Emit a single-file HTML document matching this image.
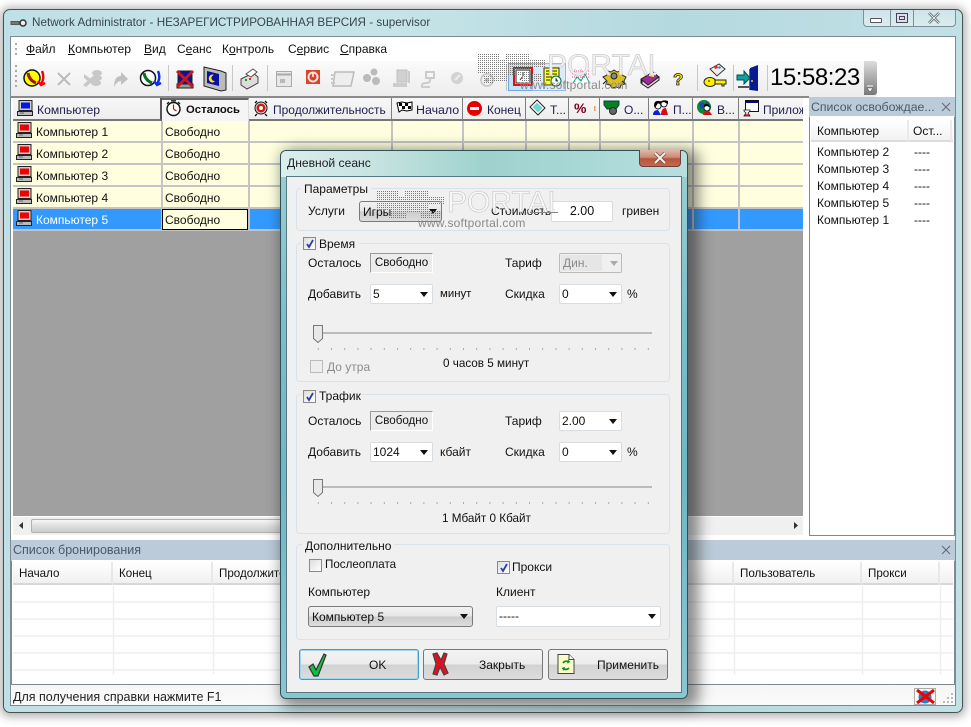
<!DOCTYPE html>
<html><head><meta charset="utf-8"><style>
html,body{margin:0;padding:0;width:971px;height:727px;overflow:hidden;background:#fff}
*{box-sizing:border-box}
body{font:12px/14px "Liberation Sans","Noto Sans CJK SC",sans-serif;color:#111;position:relative}
div,svg{position:absolute}
.t{white-space:nowrap;height:14px}
.c{border:1px solid #d8dde2;background:#fff;border-radius:2px}
.g{border:1px solid #d9e2e8;border-radius:4px}
.leg{background:#f0f0f0;padding:0 3px;white-space:nowrap;height:14px}
.ar{width:0;height:0;border:4px solid transparent;border-top:5px solid #111;border-bottom:0}
.hd{top:98px;height:23px;background:linear-gradient(#f7f7f7,#eee);border-right:1px solid #7e7e7e;border-bottom:2px solid #777}
.r{left:13px;width:790px;height:22px;background:#ffffdf;border-bottom:2px solid #c4c4c4}
.v{width:2px;background:#c4c4c4}
.cb{width:13px;height:13px;border:1px solid #8a8a8a;background:linear-gradient(135deg,#ddd,#fff)}
.sf{left:370px;width:63px;height:20px;border:1px solid #fff;border-left-color:#999;border-top-color:#999;background:#ececec;text-align:center;line-height:18px;font-size:11.6px}
.btn{top:649px;height:31px;border:1px solid #777;border-radius:3px;background:linear-gradient(#f4f4f4 0,#ececec 48%,#d2d2d2 52%,#dcdcdc 100%)}
.gl{background:linear-gradient(#e4e4e4,#bbb);border:1px solid #7a7a7a;border-radius:3px}
.w{color:#fff}
.lh{background:linear-gradient(#fff,#f0f0f0);border-right:2px solid #e8e8e8;border-bottom:2px solid #d8d8d8}
</style></head><body>

<!-- main window -->
<div style="left:3px;top:9px;width:960px;height:704px;border:1px solid #4a4f50;border-radius:7px;background:linear-gradient(90deg,#bfe0e6,#c6e4e8 40%,#b4d9df 70%,#c2e1e6);box-shadow:0 1px 9px 3px rgba(0,0,0,.3)"></div>
<svg style="left:10px;top:16px" width="18" height="14"><path d="M1 7h9M1 5.5h8v3H1z" stroke="#555" fill="#999"/><circle cx="13" cy="7" r="3" fill="#eee" stroke="#333" stroke-width="1.5"/></svg>
<div class="t" style="left:32px;top:16px;color:#39474e;font-size:11.7px">Network Administrator - НЕЗАРЕГИСТРИРОВАННАЯ ВЕРСИЯ - supervisor</div>

<!-- caption buttons -->
<div style="left:863px;top:10px;width:93px;height:17px;border:1px solid #78919a;border-top:0;border-radius:0 0 4px 4px;background:linear-gradient(#cde4e8,#dcecee)"></div>
<div style="left:890px;top:10px;width:1px;height:16px;background:#78919a"></div>
<div style="left:913px;top:10px;width:1px;height:16px;background:#78919a"></div>
<div style="left:870px;top:18px;width:12px;height:5px;border:1px solid #556;background:#fff;border-radius:1px"></div>
<div style="left:896px;top:13px;width:12px;height:10px;border:1px solid #445;background:#dde"></div>
<div style="left:899px;top:16px;width:6px;height:4px;border:1px solid #445"></div>
<svg style="left:927px;top:12px" width="14" height="12"><path d="M2 1l10 10M12 1L2 11" stroke="#4a5a60" stroke-width="2.6"/><path d="M2 1l10 10M12 1L2 11" stroke="#eee" stroke-width="1"/></svg>

<!-- client -->
<div style="left:10px;top:36px;width:946px;height:670px;background:#fff;border:1px solid #7d8b90"></div>
<div style="left:11px;top:37px;width:944px;height:24px;background:#fff"></div>
<svg style="left:15px;top:42px" width="4" height="16"><path d="M1 1v2M1 6v2M1 11v2" stroke="#aaa" stroke-width="2"/></svg>
<div class="t" style="left:26px;top:42px"><u>Ф</u>айл</div>
<div class="t" style="left:68px;top:42px;font-size:12.2px"><u>К</u>омпьютер</div>
<div class="t" style="left:144px;top:42px"><u>В</u>ид</div>
<div class="t" style="left:177px;top:42px">С<u>е</u>анс</div>
<div class="t" style="left:222px;top:42px">К<u>о</u>нтроль</div>
<div class="t" style="left:288px;top:42px">С<u>е</u>рвис</div>
<div class="t" style="left:340px;top:42px"><u>С</u>правка</div>

<!-- toolbar -->
<div style="left:11px;top:61px;width:866px;height:36px;border-radius:0 0 3px 0;background:linear-gradient(#fbfbfb,#ececec)"></div>
<div style="left:11px;top:96px;width:798px;height:2px;background:#8a8a8a"></div>
<svg style="left:15px;top:64px" width="4" height="28"><path d="M1 1v2M1 6v2M1 11v2M1 16v2M1 21v2" stroke="#aaa" stroke-width="2"/></svg>
<svg style="left:0;top:60px" width="880" height="38">
 <g stroke="#c8c8c8"><path d="M168.500 5v26M232.500 5v26M267.500 5v26M506.500 5v26M697.500 5v26M733.500 5v26M767.500 5v26"/></g>
 <circle cx="32" cy="18" r="8" fill="#ffff00" stroke="#111" stroke-width="1.500"/><path d="M28 13q1 7 8 10" stroke="#a01818" stroke-width="3" fill="none"/><path d="M42 11q3 7-1 13M38 21l3 4 4-2" stroke="#f00" stroke-width="2.400" fill="none"/>
 <path d="M58 13l12 12M70 13L58 25" stroke="#bbb" stroke-width="2"/>
 <g fill="#c8c8c8"><ellipse cx="97" cy="13" rx="5" ry="3"/><ellipse cx="97" cy="18" rx="5" ry="3"/><ellipse cx="96" cy="23" rx="5" ry="3"/><path d="M83 25l11-10 2 3-10 9zM84 14l11 8-2 3-9-7z"/></g>
 <path d="M114 27q0-11 7-11v-4l7 7-7 6v-4q-4 0-7 6z" fill="#c0c0c0"/>
 <circle cx="148" cy="18" r="7.500" fill="#fff" stroke="#111" stroke-width="1.500"/><path d="M144 13q1 7 8 10" stroke="#087020" stroke-width="3" fill="none"/><path d="M158 11q3 7-1 13M154 21l3 4 4-2" stroke="#1030e0" stroke-width="2.400" fill="none"/>
 <rect x="178" y="11" width="14" height="13" fill="#10109a" stroke="#222"/><rect x="177" y="24" width="16" height="4" fill="#999" stroke="#222"/><path d="M177 11l16 16M193 11l-16 16" stroke="#c81818" stroke-width="3"/>
 <path d="M204 7l17 4 5 2v17l-5 1-17-5z" fill="#bbb" stroke="#222"/><path d="M207 11l12 3v12l-12-3z" fill="#0a10a0"/><path d="M214 15a3.500 4 0 1 0 1 6 3 3 0 0 1-1-6z" fill="#ffe020"/>
 <path d="M241 19l12-6 5 4v6l-11 6-6-4z" fill="#ddd" stroke="#444"/><path d="M246 14l7-5 4 3-6 5z" fill="#fff" stroke="#555"/><path d="M245 20h2" stroke="#0a0" stroke-width="2"/><path d="M249 19h2" stroke="#f22" stroke-width="2"/>
 <rect x="276.500" y="11.500" width="15" height="15" fill="#e8e8e8" stroke="#aaa"/><path d="M277 14.500h14" stroke="#aaa" stroke-width="2"/><rect x="280" y="19" width="5" height="4" fill="#b8b8b8"/>
 <rect x="306" y="10" width="14" height="14" fill="#d8442c"/><circle cx="313" cy="17" r="4.500" fill="none" stroke="#f2e0d8" stroke-width="2"/><path d="M313 13v4" stroke="#fff" stroke-width="1.500"/>
 <path d="M335 12h19l-3 14h-18z" fill="#eee" stroke="#bbb" stroke-width="1.500"/><path d="M331 15h4M331 19h4M331 23h4" stroke="#c8c8c8" stroke-width="2"/>
 <circle cx="367" cy="18" r="4" fill="#bbb"/><circle cx="374" cy="12" r="3.500" fill="#bbb"/><circle cx="376" cy="21" r="4" fill="#bbb"/>
 <rect x="397" y="10" width="10" height="12" fill="#d0d0d0" stroke="#c0c0c0"/><rect x="393" y="23" width="14" height="4" fill="#ccc"/><path d="M409 11v12" stroke="#ccc" stroke-width="2"/>
 <path d="M426 12h8v6h-8zM430 18q1 5-4 5t-4 4h8" fill="none" stroke="#ccc" stroke-width="2"/>
 <circle cx="457" cy="18" r="6" fill="#d2d2d2"/><path d="M455 20l5-5" stroke="#eee" stroke-width="2"/>
 <circle cx="487" cy="20" r="6" fill="none" stroke="#ccc" stroke-width="2"/><circle cx="487" cy="20" r="2" fill="#bbb"/>
 <rect x="508.500" y="3.500" width="24" height="27" fill="#c6e0f8" stroke="#6aa8e6"/><rect x="532.500" y="3.500" width="33" height="27" fill="#dceafa" stroke="#8cbcec"/>
 <rect x="514" y="8" width="18" height="17" fill="#fff" stroke="#e01010" stroke-width="2"/><rect x="516" y="10" width="14" height="13" fill="none" stroke="#222"/><path d="M523 16l-3 4M523 16v-4" stroke="#333"/>
 <rect x="544" y="8" width="15" height="17" fill="#ffff20" stroke="#333"/><path d="M546 11h11M546 14h11M546 17h6M546 20h4" stroke="#222"/><circle cx="556" cy="21" r="5" fill="#fff" stroke="#063"/><path d="M556 18v3h2" stroke="#063"/>
 <rect x="572" y="9" width="17" height="15" fill="#fff"/><path d="M572 11h17M572 14h17M572 17h17" stroke="#e04a8a" stroke-dasharray="1 1"/><path d="M573 23l4-6 4 4 4-7 4 8" stroke="#0a8" fill="none"/><path d="M575 9v15M581 9v15" stroke="#5cc" stroke-dasharray="1 1"/>
 <path d="M603 17l4-2 1-4 3 1 3-2 3 2 4-1 1 4 4 2-2 4 1 3-4 1-1 3-4-1-4 1-2-3-4-1 1-3z" fill="#d9c21c" stroke="#333"/><circle cx="614" cy="16" r="3" fill="#888" stroke="#222"/><path d="M606 21l-3 3M622 21l3 3" stroke="#111"/>
 <path d="M641 19l12-7 6 5-11 9-7-3z" fill="#9a2e90" stroke="#222"/><path d="M642 20v4l6 4 11-8v-3l-11 8z" fill="#e6d0ea" stroke="#222"/><path d="M649 15l5 1" stroke="#ff0" stroke-width="2"/>
 <text x="673" y="25" font-family="Liberation Sans" font-weight="bold" font-size="17" fill="#ffe000" stroke="#111" stroke-width=".7">?</text>
 <path d="M710 9l9-5 6 5-8 7z" fill="#eee" stroke="#333"/><path d="M714 7l3-2 1 3-3 1z" fill="#e22"/><path d="M718 7l2-1 1 2-2 1z" fill="#28c"/><ellipse cx="710" cy="22" rx="6" ry="4.500" fill="#ffee00" stroke="#222"/><path d="M715 20h11v4h-2v2h-2v-2h-7z" fill="#ffee00" stroke="#222"/><path d="M708 21h2" stroke="#222"/>
 <rect x="749" y="9" width="9" height="21" fill="#666"/><path d="M750 8l8-3v26l-8-1z" fill="#0a1a90"/><circle cx="752" cy="21" r="1" fill="#fc0"/><path d="M737 15h7v-4l6 7-6 6v-4h-7z" fill="#12a0a0" stroke="#055"/><path d="M738 27h11" stroke="#555" stroke-width="2"/>
</svg>
<div class="t" style="left:770px;top:66px;height:24px;font-size:24px;line-height:24px;color:#000;letter-spacing:-.45px">15:58:23</div>
<div style="left:864px;top:61px;width:13px;height:34px;border-radius:0 3px 3px 0;background:linear-gradient(#ddd,#888 85%,#777)"></div>
<svg style="left:866px;top:85px" width="10" height="8"><path d="M1 1h6" stroke="#fff"/><path d="M1 3h6l-3 4z" fill="#fff" stroke="#222" stroke-width=".4"/></svg>

<!-- grid header -->
<div class="hd" style="left:13px;width:149px;border-right:2px solid #555"></div>
<div class="hd" style="left:162px;width:87px;border-top:2px solid #666;border-bottom:0;background:#f5f5f5;border-right:1px solid #ddd"></div>
<div class="hd" style="left:249px;width:143px"></div>
<div class="hd" style="left:392px;width:71px"></div>
<div class="hd" style="left:463px;width:63px"></div>
<div class="hd" style="left:526px;width:43px"></div>
<div class="hd" style="left:569px;width:31px"></div>
<div class="hd" style="left:600px;width:49px"></div>
<div class="hd" style="left:649px;width:44px"></div>
<div class="hd" style="left:693px;width:46px"></div>
<div class="hd" style="left:739px;width:64px;border-right:0"></div>

<svg style="left:0;top:98px" width="810" height="24">
 <defs>
  <g id="pc"><rect x="2" y=".5" width="13" height="10" fill="#ccc" stroke="#222"/><rect x=".5" y="11.500" width="15" height="4" fill="#bbb" stroke="#222"/><path d="M3 13h4" stroke="#666"/></g>
 </defs>
 <g transform="translate(17,2)"><use href="#pc"/><rect x="4" y="2.500" width="9" height="6" fill="#0018e8"/></g>
 <g transform="translate(166,2)"><circle cx="7.500" cy="9" r="6.500" fill="#fff" stroke="#111" stroke-width="1.400"/><path d="M7.500 9V4.500M7.500 9l3 2" stroke="#c01010" stroke-width="1.200"/><path d="M5 .8h5M1 4l2-2M14 4l-2-2" stroke="#222" stroke-width="1.400"/></g>
 <g transform="translate(254,3)"><circle cx="7" cy="7" r="6" fill="#ddd" stroke="#111"/><circle cx="7" cy="7" r="4.500" fill="#d01818"/><circle cx="7" cy="7" r="2" fill="#ffd"/><path d="M1 2l2-2M13 2l-2-2M3 13l-2 2M11 13l2 2" stroke="#111" stroke-width="1.300"/></g>
 <g transform="translate(397,3)"><path d="M0 2l5-1 5 1 5-1v8l-5 1-5-1-3 2z" fill="#fff" stroke="#000"/><path d="M2 2h3v3H2zM8 2h3v3H8zM5 5h3v3H5zM11 5h3v3h-3z" fill="#000"/></g>
 <g transform="translate(467,3)"><circle cx="7.500" cy="7.500" r="7.500" fill="#e80000"/><rect x="3" y="6" width="9" height="3" fill="#fff"/></g>
 <g transform="translate(530,2)"><path d="M7 0l8 8-7 7-8-8z" fill="#fff" stroke="#222"/><path d="M7 2.500l5.500 5.500-4.500 4.500L2.500 7z" fill="#70d8d0"/></g>
 <text x="574" y="15" font-family="Liberation Sans" font-weight="bold" font-size="14" fill="#7a0020">%</text>
 <rect x="594" y="8" width="1.500" height="5" fill="#e8a060"/>
 <g transform="translate(604,3)"><path d="M0 0h15v4l-3 4h-2v3h-4V8H3L0 4z" fill="#088020" stroke="#044"/><circle cx="9" cy="10" r="3.500" fill="#666" stroke="#222"/></g>
 <g transform="translate(653,2)"><circle cx="5" cy="6" r="3" fill="#fff" stroke="#222"/><path d="M1 6q0-6 5-5 4 0 4 3L5 3 2 8z" fill="#000"/><circle cx="11" cy="4" r="3" fill="#fff" stroke="#222"/><path d="M7 3q2-4 8-2v3l-4-2z" fill="#000"/><path d="M0 15q0-5 5-5l3 5z" fill="#1020d0"/><path d="M8 15q0-7 5-7l2 7z" fill="#d01010"/></g>
 <g transform="translate(697,2)"><circle cx="7" cy="7" r="7" fill="#0c8a30"/><path d="M2 4q4-3 5 0t-3 5zM9 1l4 4-3 2z" fill="#2040d0"/><circle cx="10" cy="8" r="3" fill="#fff" stroke="#222"/><path d="M7 7q0-4 3-3t4 4l-4-2z" fill="#000"/><path d="M6 15q1-4 4-4t5 4z" fill="#d01010"/></g>
 <g transform="translate(743,2)"><rect x="2.500" y=".5" width="13" height="11" fill="#fff" stroke="#111"/><rect x="3" y="1" width="12" height="2" fill="#0a0a80"/><path d="M1 10h6v1L5 13l2 3H1l2-3-2-2z" fill="#fff" stroke="#111" stroke-width=".8"/><path d="M2 15h4" stroke="#d01010" stroke-width="1.500"/></g>
</svg>

<div class="t" style="left:37px;top:103px;color:#202050;font-size:12.2px">Компьютер</div>
<div class="t" style="left:186px;top:103px;font-weight:bold;font-size:11.3px">Осталось</div>
<div class="t" style="left:273px;top:103px;color:#202050">Продолжительность</div>
<div class="t" style="left:416px;top:103px;color:#202050;font-size:12.4px">Начало</div>
<div class="t" style="left:487px;top:103px;color:#202050">Конец</div>
<div class="t" style="left:550px;top:103px;color:#202050">Т...</div>
<div class="t" style="left:624px;top:103px;color:#202050">О...</div>
<div class="t" style="left:673px;top:103px;color:#202050">П...</div>
<div class="t" style="left:717px;top:103px;color:#202050">В...</div>
<div style="left:739px;top:103px;width:64px;height:14px;overflow:hidden"><div class="t" style="left:24px;top:0;color:#202050">Приложение</div></div>

<!-- grid rows -->
<div style="left:13px;top:121px;width:790px;height:395px;background:#a0a0a0"></div>
<div class="r" style="top:121px"></div>
<div class="r" style="top:143px"></div>
<div class="r" style="top:165px"></div>
<div class="r" style="top:187px"></div>
<div class="r" style="top:209px;background:#3399ff;height:22px"></div>
<div class="v" style="left:161px;top:121px;height:110px"></div>
<div class="v" style="left:248px;top:121px;height:110px"></div>
<div class="v" style="left:391px;top:121px;height:110px"></div>
<div class="v" style="left:462px;top:121px;height:110px"></div>
<div class="v" style="left:525px;top:121px;height:110px"></div>
<div class="v" style="left:568px;top:121px;height:110px"></div>
<div class="v" style="left:599px;top:121px;height:110px"></div>
<div class="v" style="left:648px;top:121px;height:110px"></div>
<div class="v" style="left:692px;top:121px;height:110px"></div>
<div class="v" style="left:738px;top:121px;height:110px"></div>
<svg style="left:0;top:120px" width="40" height="110">
 <g transform="translate(16,2)"><use href="#pc"/><rect x="4" y="2.500" width="9" height="6" fill="#f00000"/></g>
 <g transform="translate(16,24)"><use href="#pc"/><rect x="4" y="2.500" width="9" height="6" fill="#f00000"/></g>
 <g transform="translate(16,46)"><use href="#pc"/><rect x="4" y="2.500" width="9" height="6" fill="#f00000"/></g>
 <g transform="translate(16,68)"><use href="#pc"/><rect x="4" y="2.500" width="9" height="6" fill="#f00000"/></g>
 <g transform="translate(16,90)"><use href="#pc"/><rect x="4" y="2.500" width="9" height="6" fill="#f00000"/></g>
</svg>
<div class="t" style="left:36px;top:125px">Компьютер 1</div><div class="t" style="left:165px;top:125px">Свободно</div>
<div class="t" style="left:36px;top:147px">Компьютер 2</div><div class="t" style="left:165px;top:147px">Свободно</div>
<div class="t" style="left:36px;top:169px">Компьютер 3</div><div class="t" style="left:165px;top:169px">Свободно</div>
<div class="t" style="left:36px;top:191px">Компьютер 4</div><div class="t" style="left:165px;top:191px">Свободно</div>
<div class="t w" style="left:36px;top:213px">Компьютер 5</div>
<div style="left:162px;top:209px;width:86px;height:21px;background:#ffffdf;border:1px solid #000"></div>
<div class="t" style="left:165px;top:213px">Свободно</div>

<!-- h scrollbar -->
<div style="left:13px;top:517px;width:790px;height:18px;background:#f0f0f0"></div>
<div style="left:31px;top:519px;width:300px;height:14px;border:1px solid #b0b0b0;border-radius:2px;background:linear-gradient(#f6f6f6,#ddd 50%,#ccc)"></div>
<svg style="left:17px;top:521px" width="8" height="10"><path d="M6 1v7L2 4.500z" fill="#333"/></svg>
<svg style="left:792px;top:521px" width="8" height="10"><path d="M2 1v7l4-3.500z" fill="#333"/></svg>

<!-- right panel -->
<div style="left:809px;top:97px;width:146px;height:20px;background:#bccbd9"></div>
<div class="t" style="left:811px;top:100px;color:#4a5a6c;font-size:12.3px">Список освобождае...</div>
<svg style="left:941px;top:101px" width="10" height="11"><path d="M1 2l8 8M9 2l-8 8" stroke="#667" stroke-width="1"/></svg>
<div style="left:809px;top:116px;width:146px;height:420px;background:#fff;border:1px solid #80898f;border-top-color:#fff"></div>
<div style="left:811px;top:120px;width:142px;height:22px;background:linear-gradient(#fff,#f2f2f2);border-bottom:2px solid #dcdcdc"></div>
<div style="left:907px;top:120px;width:2px;height:21px;background:#eaeaea"></div>
<div style="left:950px;top:120px;width:2px;height:21px;background:#eaeaea"></div>
<div class="t" style="left:817px;top:124px">Компьютер</div>
<div class="t" style="left:913px;top:124px">Ост...</div>
<div class="t" style="left:817px;top:145px">Компьютер 2</div><div class="t" style="left:914px;top:145px">----</div>
<div class="t" style="left:817px;top:162px">Компьютер 3</div><div class="t" style="left:914px;top:162px">----</div>
<div class="t" style="left:817px;top:179px">Компьютер 4</div><div class="t" style="left:914px;top:179px">----</div>
<div class="t" style="left:817px;top:196px">Компьютер 5</div><div class="t" style="left:914px;top:196px">----</div>
<div class="t" style="left:817px;top:213px">Компьютер 1</div><div class="t" style="left:914px;top:213px">----</div>

<!-- bottom panel -->
<div style="left:11px;top:540px;width:944px;height:20px;background:#bccbd9"></div>
<div class="t" style="left:13px;top:543px;color:#4a5a6c;font-size:12.500px">Список бронирования</div>
<svg style="left:941px;top:544px" width="10" height="11"><path d="M1 2l8 8M9 2l-8 8" stroke="#667" stroke-width="1"/></svg>
<div style="left:11px;top:560px;width:944px;height:125px;background:#fff;border:1px solid #80898f;border-top-color:#fff"></div>
<div class="lh" style="left:13px;top:562px;width:100px;height:23px"></div>
<div class="lh" style="left:113px;top:562px;width:100px;height:23px"></div>
<div class="lh" style="left:213px;top:562px;width:521px;height:23px"></div>
<div class="lh" style="left:734px;top:562px;width:128px;height:23px"></div>
<div class="lh" style="left:862px;top:562px;width:78px;height:23px"></div>
<div class="lh" style="left:940px;top:562px;width:13px;height:23px;border-right:0"></div>
<div class="t" style="left:19px;top:567px;font-size:11.6px">Начало</div>
<div class="t" style="left:119px;top:567px;font-size:11.6px">Конец</div>
<div class="t" style="left:219px;top:567px;font-size:11.6px">Продолжительность</div>
<div class="t" style="left:740px;top:567px;font-size:11.6px">Пользователь</div>
<div class="t" style="left:868px;top:567px;font-size:11.6px">Прокси</div>
<svg style="left:0;top:585px" width="960" height="100">
 <g stroke="#efefef" stroke-width="1.500"><path d="M13 17h940M13 34h940M13 51h940M13 68h940M13 85h940"/><path d="M113.500 1v88M213.500 1v88M734.500 1v88M862.500 1v88M940.500 1v88"/></g>
</svg>

<!-- status -->
<div style="left:11px;top:685px;width:944px;height:20px;background:linear-gradient(#f6f6f6,#fafafa)"></div>
<div class="t" style="left:13px;top:690px;font-size:12.500px;color:#222">Для получения справки нажмите F1</div>
<div style="left:914px;top:688px;width:22px;height:17px;border:1px solid #aaa"></div>
<svg style="left:916px;top:689px" width="19" height="15"><circle cx="9" cy="8" r="6.500" fill="#2a80c0"/><path d="M6 3l5 2-4 5z" fill="#2a9a50"/><path d="M1 1l17 13M18 1L1 14" stroke="#f00000" stroke-width="3"/></svg>
<svg style="left:942px;top:692px" width="12" height="12"><path d="M9 1h2v2H9zM5 5h2v2H5zM9 5h2v2H9zM1 9h2v2H1zM5 9h2v2H5zM9 9h2v2H9z" fill="#bbb"/></svg>

<!-- watermark 1 -->
<svg style="left:476px;top:50px" width="180" height="45">
 <defs><pattern id="d" width="2" height="2" patternUnits="userSpaceOnUse"><rect width="1" height="1" fill="#7a7a7a"/></pattern></defs>
 <path d="M2 3h22v6h6V3h24v6h16v8H54v6h12v8H46v-6H32v6H14v-8H2zM8 25h10v8H8z" fill="url(#d)"/>
 <text x="71" y="25" font-family="Liberation Sans" font-size="30" fill="#f0f0f0" stroke="#bdbdbd" stroke-width=".5">PORTAL</text>
</svg>
<div class="t" style="left:520px;top:78px;color:#8a8a8a;font-size:12px;letter-spacing:.2px">www.softportal.com</div>

<!-- dialog shadow + frame -->
<div style="left:280px;top:150px;width:408px;height:549px;border:1px solid #2e5058;border-radius:6px;background:linear-gradient(#9fd0d2,#7cbfcb 30%,#6fb6c6 60%,#8ac6d2);box-shadow:6px 4px 14px 5px rgba(30,30,30,.5)"></div>
<div style="left:281px;top:151px;width:406px;height:26px;border-radius:5px 5px 0 0;background:linear-gradient(90deg,#dbeeeb 0,#c4e2df 25%,#9ed2ce 50%,#a9d8d6 75%,#b8dfe0 100%)"></div>
<div class="t" style="left:287px;top:156px;color:#222;font-size:12.100px">Дневной сеанс</div>
<div style="left:639px;top:150px;width:42px;height:17px;border:1px solid #6a4038;border-top:0;border-radius:0 0 4px 4px;background:linear-gradient(#e0b8a8,#cc8c78 45%,#b8543c 55%,#c46a50)"></div>
<svg style="left:652px;top:152px" width="16" height="12"><path d="M3 1l10 10M13 1L3 11" stroke="#6a4a42" stroke-width="3.400"/><path d="M3 1l10 10M13 1L3 11" stroke="#f4f0ee" stroke-width="2"/></svg>
<div style="left:286px;top:176px;width:396px;height:517px;background:#f0f0f0;border:1px solid #567880"></div>

<!-- groups -->
<div class="g" style="left:296px;top:188px;width:374px;height:43px"></div>
<div class="g" style="left:296px;top:243px;width:374px;height:139px"></div>
<div class="g" style="left:296px;top:394px;width:374px;height:140px"></div>
<div class="g" style="left:296px;top:544px;width:374px;height:96px"></div>
<div class="t leg" style="left:301px;top:182px">Параметры</div>
<div class="leg" style="left:301px;top:236px;width:58px"></div>
<div class="leg" style="left:301px;top:389px;width:58px"></div>
<div class="t leg" style="left:302px;top:539px">Дополнительно</div>

<!-- Параметры -->
<div class="t" style="left:308px;top:204px">Услуги</div>
<div class="gl" style="left:359px;top:201px;width:83px;height:21px;background:linear-gradient(#f2f2f2,#e6e6e6 48%,#ccc 52%,#ddd)"></div>
<div class="t" style="left:363px;top:205px">Игры</div>
<div class="ar" style="left:429px;top:209px"></div>
<div class="t" style="left:491px;top:204px">Стоимость</div>
<div class="c" style="left:551px;top:201px;width:62px;height:21px;text-align:center;line-height:19px;font-size:12.500px">2.00</div>
<div class="t" style="left:622px;top:204px">гривен</div>

<!-- Время -->
<div class="cb" style="left:303px;top:237px"></div>
<svg style="left:304px;top:238px" width="12" height="12"><path d="M3 6l2 3 4-7" stroke="#2a3fa8" stroke-width="1.800" fill="none"/></svg>
<div class="t" style="left:319px;top:237px">Время</div>
<div class="t" style="left:308px;top:256px">Осталось</div>
<div class="sf" style="top:253px">Свободно</div>
<div class="t" style="left:505px;top:256px">Тариф</div>
<div class="c" style="left:559px;top:253px;width:63px;height:20px;border-color:#bbb;background:#f0f0f0"></div>
<div style="left:561px;top:255px;width:41px;height:16px;background:#e6e6e6"></div>
<div class="t" style="left:563px;top:256px;color:#8a8a8a">Дин.</div>
<div class="ar" style="left:610px;top:261px;border-top-color:#aaa"></div>
<div class="t" style="left:308px;top:287px">Добавить</div>
<div class="c" style="left:370px;top:284px;width:63px;height:20px"></div>
<div class="t" style="left:373px;top:287px">5</div>
<div class="ar" style="left:420px;top:292px"></div>
<div class="t" style="left:440px;top:287px;font-size:11.4px">минут</div>
<div class="t" style="left:505px;top:287px">Скидка</div>
<div class="c" style="left:559px;top:284px;width:63px;height:20px"></div>
<div class="t" style="left:562px;top:287px">0</div>
<div class="ar" style="left:609px;top:292px"></div>
<div class="t" style="left:627px;top:287px">%</div>
<svg style="left:310px;top:323px" width="345" height="30">
 <path d="M4 10h338" stroke="#bbb" stroke-width="2"/>
 <path d="M3.500 2.500h9v13l-4.500 4-4.500-4z" fill="#e8e8e8" stroke="#777"/>
 <path d="M8.300 25v2M21.500 25v2M34.700 25v2M47.900 25v2M61.100 25v2M74.300 25v2M87.500 25v2M100.700 25v2M113.900 25v2M127.100 25v2M140.300 25v2M153.500 25v2M166.700 25v2M179.900 25v2M193.100 25v2M206.300 25v2M219.500 25v2M232.700 25v2M245.900 25v2M259.100 25v2M272.300 25v2M285.500 25v2M298.700 25v2M311.900 25v2M325.100 25v2M338.300 25v2" stroke="#aaa"/>
</svg>
<div class="cb" style="left:310px;top:360px;border-color:#bbb;background:#eee"></div>
<div class="t" style="left:327px;top:360px;color:#8c8c8c">До утра</div>
<div class="t" style="left:443px;top:357px;font-size:11.700px">0 часов 5 минут</div>

<!-- Трафик -->
<div class="cb" style="left:303px;top:390px"></div>
<svg style="left:304px;top:391px" width="12" height="12"><path d="M3 6l2 3 4-7" stroke="#2a3fa8" stroke-width="1.800" fill="none"/></svg>
<div class="t" style="left:319px;top:389px">Трафик</div>
<div class="t" style="left:308px;top:414px">Осталось</div>
<div class="sf" style="top:411px">Свободно</div>
<div class="t" style="left:505px;top:414px">Тариф</div>
<div class="c" style="left:559px;top:411px;width:63px;height:20px"></div>
<div class="t" style="left:562px;top:414px">2.00</div>
<div class="ar" style="left:609px;top:419px"></div>
<div class="t" style="left:308px;top:445px">Добавить</div>
<div class="c" style="left:370px;top:442px;width:63px;height:20px"></div>
<div class="t" style="left:373px;top:445px">1024</div>
<div class="ar" style="left:420px;top:450px"></div>
<div class="t" style="left:440px;top:445px">кбайт</div>
<div class="t" style="left:505px;top:445px">Скидка</div>
<div class="c" style="left:559px;top:442px;width:63px;height:20px"></div>
<div class="t" style="left:562px;top:445px">0</div>
<div class="ar" style="left:609px;top:450px"></div>
<div class="t" style="left:627px;top:445px">%</div>
<svg style="left:310px;top:477px" width="345" height="30">
 <path d="M4 10h338" stroke="#bbb" stroke-width="2"/>
 <path d="M3.500 2.500h9v13l-4.500 4-4.500-4z" fill="#e8e8e8" stroke="#777"/>
 <path d="M8.300 25v2M21.500 25v2M34.700 25v2M47.900 25v2M61.100 25v2M74.300 25v2M87.500 25v2M100.700 25v2M113.900 25v2M127.100 25v2M140.300 25v2M153.500 25v2M166.700 25v2M179.900 25v2M193.100 25v2M206.300 25v2M219.500 25v2M232.700 25v2M245.900 25v2M259.100 25v2M272.300 25v2M285.500 25v2M298.700 25v2M311.900 25v2M325.100 25v2M338.300 25v2" stroke="#aaa"/>
</svg>
<div class="t" style="left:442px;top:512px;font-size:11.700px">1 Мбайт 0 Кбайт</div>

<!-- Дополнительно -->
<div class="cb" style="left:309px;top:559px"></div>
<div class="t" style="left:325px;top:558px;font-size:11.600px">Послеоплата</div>
<div class="cb" style="left:497px;top:561px"></div>
<svg style="left:498px;top:562px" width="12" height="12"><path d="M3 6l2 3 4-7" stroke="#2a3fa8" stroke-width="1.800" fill="none"/></svg>
<div class="t" style="left:512px;top:560px">Прокси</div>
<div class="t" style="left:308px;top:585px">Компьютер</div>
<div class="t" style="left:496px;top:585px">Клиент</div>
<div class="gl" style="left:308px;top:606px;width:165px;height:21px;background:linear-gradient(#f2f2f2,#e6e6e6 48%,#ccc 52%,#ddd)"></div>
<div class="t" style="left:312px;top:610px">Компьютер 5</div>
<div class="ar" style="left:460px;top:614px"></div>
<div class="c" style="left:496px;top:606px;width:165px;height:21px"></div>
<div class="t" style="left:499px;top:609px">-----</div>
<div class="ar" style="left:648px;top:614px"></div>

<!-- buttons -->
<div class="btn" style="left:299px;width:120px;border-color:#3a9cd0;box-shadow:0 0 0 1px #9fd6ef inset"></div>
<div class="btn" style="left:423px;width:120px"></div>
<div class="btn" style="left:548px;width:120px"></div>
<svg style="left:306px;top:652px" width="26" height="26"><path d="M3 15l4-3 3 6L18 2l2 1-8 21H8z" fill="#12c040" stroke="#333" stroke-width="1.200"/></svg>
<svg style="left:430px;top:652px" width="22" height="24"><path d="M3 2l4-1 4 7 3-7 3 1-3 10 4 9-4 2-4-8-3 8-4-1 3-10z" fill="#e01020" stroke="#444" stroke-width="1.200"/></svg>
<svg style="left:557px;top:652px" width="20" height="24"><path d="M1 2.500h11l5 5v14H1z" fill="#fdfdc8" stroke="#444"/><path d="M12 2.500v5h5" fill="#fff" stroke="#444"/><path d="M6 11q2-3 6-1M6 16q3 3 6 0" stroke="#128a20" stroke-width="1.600" fill="none"/><path d="M11 7.500l2.500 2.500-3.500 1.500zM7 19l-2.500-3 3.500-1z" fill="#128a20"/></svg>
<div class="t" style="left:369px;top:658px">OK</div>
<div class="t" style="left:479px;top:658px">Закрыть</div>
<div class="t" style="left:597px;top:658px">Применить</div>

<!-- watermark 2 -->
<svg style="left:375px;top:187px" width="180" height="45">
 <path d="M2 3h22v6h6V3h24v6h16v8H54v6h12v8H46v-6H32v6H14v-8H2z" fill="url(#d)"/>
 <text x="72" y="25" font-family="Liberation Sans" font-size="30" fill="#f8f8f8" stroke="#bdbdbd" stroke-width=".5">PORTAL</text>
</svg>
<div style="left:530px;top:212px;width:28px;height:1px;background:#888"></div>
<div class="t" style="left:418px;top:216px;color:#8a8a8a;font-size:12px;letter-spacing:.2px">www.softportal.com</div>
</body></html>
